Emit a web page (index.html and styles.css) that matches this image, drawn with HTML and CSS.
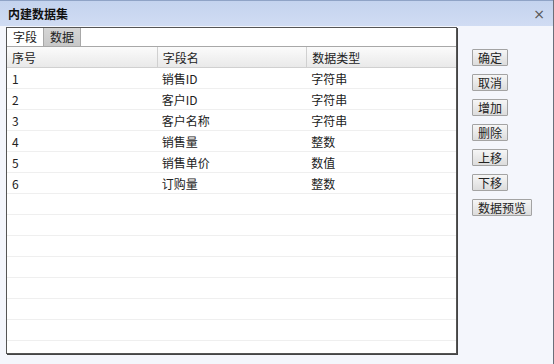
FILE: index.html
```html
<!DOCTYPE html>
<html lang="zh">
<head>
	<meta charset="utf-8" />
	<title>内建数据集</title>
	<link rel="stylesheet" href="styles.css">
</head>
<body>
	<div class="dialog">
		<div class="titlebar">
			<span class="title">内建数据集</span>
			<span class="close">×</span>
		</div>
		<div class="content">
			<div class="panel">
				<div class="tabs">
					<div class="tab active">字段</div>
					<div class="tab">数据</div>
				</div>
				<div class="grid">
					<div class="row head">
						<div class="cell">序号</div>
						<div class="cell">字段名</div>
						<div class="cell">数据类型</div>
					</div>
					<div class="row"><div class="cell">1</div><div class="cell">销售ID</div><div class="cell">字符串</div></div>
					<div class="row"><div class="cell">2</div><div class="cell">客户ID</div><div class="cell">字符串</div></div>
					<div class="row"><div class="cell">3</div><div class="cell">客户名称</div><div class="cell">字符串</div></div>
					<div class="row"><div class="cell">4</div><div class="cell">销售量</div><div class="cell">整数</div></div>
					<div class="row"><div class="cell">5</div><div class="cell">销售单价</div><div class="cell">数值</div></div>
					<div class="row"><div class="cell">6</div><div class="cell">订购量</div><div class="cell">整数</div></div>
					<div class="row empty"></div>
					<div class="row empty"></div>
					<div class="row empty"></div>
					<div class="row empty"></div>
					<div class="row empty"></div>
					<div class="row empty"></div>
					<div class="row empty"></div>
					<div class="row empty"></div>
				</div>
			</div>
			<div class="actions">
				<button class="btn">确定</button>
				<button class="btn">取消</button>
				<button class="btn">增加</button>
				<button class="btn">删除</button>
				<button class="btn">上移</button>
				<button class="btn">下移</button>
				<button class="btn">数据预览</button>
			</div>
		</div>
	</div>
</body>
</html>
```

FILE: styles.css
```css
body {
	margin: 0;
	background-color: #f4f6fc;
	font-family: "Noto Sans CJK SC", "Liberation Sans", sans-serif;
	font-size: 12px;
	color: #222;
}

.dialog {
	width: 554px;
	height: 364px;
	box-sizing: border-box;
	border-right: 1px solid #6a6f7a;
	display: flex;
	flex-direction: column;
}

.titlebar {
	height: 26px;
	box-sizing: border-box;
	border-top: 1px solid #8fa3c6;
	background: linear-gradient(to bottom, #c4d3ee, #d0dcf3);
	display: flex;
	align-items: center;
	justify-content: space-between;
	padding: 0 8px 0 8px;
}

.title {
	font-weight: bold;
	color: #111;
}

.close {
	color: #555;
	font-size: 14px;
	font-family: "DejaVu Sans", sans-serif;
}

.content {
	display: flex;
	padding: 1px 0 0 6px;
}

/* Field panel
 * =========== */

.panel {
	width: 449px;
	height: 325px;
	border: 1px solid #555;
	box-shadow: 1px 1px 0 #444;
	background-color: #fff;
	display: flex;
	flex-direction: column;
	overflow: hidden;
}

.tabs {
	display: flex;
	height: 18px;
	border-bottom: 1px solid #a8a8a8;
}

.tab {
	padding: 0 6px;
	line-height: 18px;
	border-right: 1px solid #a8a8a8;
}

.tab:not(.active) {
	background: linear-gradient(to bottom, #d6d6d6, #c8c8c8);
}

.grid {
	flex: 1;
	overflow: hidden;
}

.row {
	display: flex;
	height: 21px;
	box-sizing: border-box;
	border-bottom: 1px solid #efefef;
}

.row.head {
	height: 21px;
	background: linear-gradient(to bottom, #fbfbfb, #e9e9e9);
	border-bottom: 1px solid #d0d0d0;
}

.cell {
	width: 150px;
	padding-left: 5px;
	line-height: 21px;
	box-sizing: border-box;
}

.head .cell + .cell {
	border-left: 1px solid #d0d0d0;
}

/* Buttons
 * ======= */

.actions {
	display: flex;
	flex-direction: column;
	align-items: flex-start;
	gap: 8px;
	padding: 22px 0 0 15px;
}

.btn {
	height: 17px;
	padding: 0 5px;
	font-family: inherit;
	font-size: 12px;
	line-height: 15px;
	color: #222;
	border: 1px solid #a3a3a3;
	border-radius: 1px;
	background: linear-gradient(to bottom, #f6f6f6, #dcdcdc);
}
```
